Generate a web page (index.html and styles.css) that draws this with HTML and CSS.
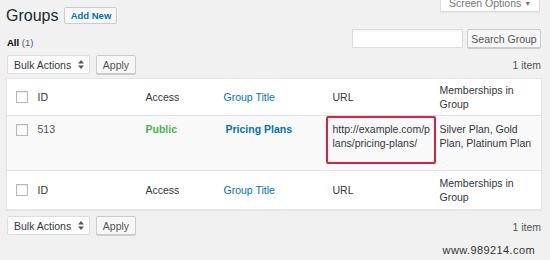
FILE: index.html
```html
<!DOCTYPE html>
<html lang="en">
<head>
    <meta charset="UTF-8">
    <title>Groups</title>
    <link rel="stylesheet" href="styles.css">
</head>
<body>
    <div class="wrap">
        <div class="screen-options">Screen Options <span class="caret">&#9660;</span></div>

        <div class="title-row">
            <h1>Groups</h1>
            <a href="#" class="add-new">Add New</a>
        </div>

        <div class="filter-row">
            <div class="views"><b>All</b> <span class="count">(1)</span></div>
            <div class="search-box">
                <input type="text" class="search-input">
                <button class="btn">Search Group</button>
            </div>
        </div>

        <div class="tablenav">
            <div class="actions">
                <div class="select">
                    <span>Bulk Actions</span>
                    <svg width="6" height="9" viewBox="0 0 6 9"><path d="M3 0L6 3.5H0Z M3 9L6 5.5H0Z" fill="#555"/></svg>
                </div>
                <button class="btn">Apply</button>
            </div>
            <div class="num">1 item</div>
        </div>

        <table class="list">
            <colgroup>
                <col style="width: 25px">
                <col style="width: 108px">
                <col style="width: 78px">
                <col style="width: 109px">
                <col style="width: 107px">
                <col style="width: 108px">
            </colgroup>
            <thead>
                <tr>
                    <th class="check"><span class="cb"></span></th>
                    <th>ID</th>
                    <th>Access</th>
                    <th class="sortable">Group Title</th>
                    <th>URL</th>
                    <th>Memberships in Group</th>
                </tr>
            </thead>
            <tbody>
                <tr>
                    <td class="check"><span class="cb"></span></td>
                    <td class="id">513</td>
                    <td class="public">Public</td>
                    <td class="title">Pricing Plans</td>
                    <td class="url">http://example.com/plans/pricing-plans/<span class="highlight"></span></td>
                    <td>Silver Plan, Gold Plan, Platinum Plan</td>
                </tr>
            </tbody>
            <tfoot>
                <tr>
                    <th class="check"><span class="cb"></span></th>
                    <th>ID</th>
                    <th>Access</th>
                    <th class="sortable">Group Title</th>
                    <th>URL</th>
                    <th>Memberships in Group</th>
                </tr>
            </tfoot>
        </table>

        <div class="tablenav bottom">
            <div class="actions">
                <div class="select">
                    <span>Bulk Actions</span>
                    <svg width="6" height="9" viewBox="0 0 6 9"><path d="M3 0L6 3.5H0Z M3 9L6 5.5H0Z" fill="#555"/></svg>
                </div>
                <button class="btn">Apply</button>
            </div>
            <div class="num">1 item</div>
        </div>

        <div class="watermark">www.989214.com</div>
    </div>
</body>
</html>
```

FILE: styles.css
```css
* {
    margin: 0;
    padding: 0;
    box-sizing: border-box;
}

body {
    font-family: "Liberation Sans", Arial, sans-serif;
    font-size: 10.5px;
    background-color: #f1f1f1;
    color: #32373c;
    overflow: hidden;
}

.wrap {
    width: 550px;
    padding: 0 9px 0 6px;
}

.screen-options {
    float: right;
    width: 100px;
    height: 21px;
    margin-top: -9px;
    margin-right: 1px;
    padding-top: 4px;
    line-height: 16px;
    text-align: center;
    background-color: #fff;
    border: 1px solid #ddd;
    border-top: none;
    box-shadow: 0 1px 1px rgba(0,0,0,0.04);
    color: #72777c;
}

.screen-options .caret {
    font-size: 7px;
    vertical-align: 1px;
}

.title-row {
    display: flex;
    align-items: center;
    padding-top: 7px;
    height: 24px;
}

.title-row h1 {
    font-size: 16px;
    font-weight: 400;
    line-height: 17px;
    color: #23282d;
}

.add-new {
    margin-left: 6px;
    width: 53px;
    height: 17px;
    line-height: 15px;
    text-align: center;
    border: 1px solid #ccc;
    border-radius: 2px;
    background-color: #f7f7f7;
    color: #0073aa;
    font-size: 9.5px;
    font-weight: bold;
    text-decoration: none;
}

.filter-row {
    display: flex;
    justify-content: space-between;
    align-items: flex-end;
    margin-top: 5px;
    height: 19px;
}

.views {
    margin-left: 1px;
    margin-bottom: -1px;
    line-height: 12px;
    font-size: 9.5px;
    color: #000;
}

.views .count {
    color: #555d66;
}

.search-box {
    display: flex;
    gap: 4px;
}

.search-input {
    width: 111px;
    height: 19px;
    border: 1px solid #ddd;
    background-color: #fff;
    box-shadow: inset 0 1px 2px rgba(0,0,0,0.07);
}

.btn {
    height: 19px;
    padding: 0 6px;
    font-family: inherit;
    font-size: 10.5px;
    white-space: nowrap;
    color: #555;
    background-color: #f7f7f7;
    border: 1px solid #ccc;
    border-radius: 2px;
    box-shadow: 0 1px 0 #ccc;
}

.search-box .btn {
    width: 74px;
    padding: 0;
}

.tablenav {
    display: flex;
    justify-content: space-between;
    align-items: center;
    margin-top: 7px;
    height: 19px;
}

.tablenav.bottom {
    margin-top: 6px;
}

.actions {
    display: flex;
    gap: 6px;
    margin-left: 1px;
}

.actions .btn {
    width: 40px;
    padding: 0;
}

.select {
    display: flex;
    justify-content: space-between;
    align-items: center;
    width: 83px;
    height: 19px;
    padding: 0 5px 0 6px;
    background-color: #fff;
    border: 1px solid #ddd;
    border-radius: 2px;
    color: #32373c;
}

.num {
    color: #555;
}

.tablenav.bottom .num {
    margin-top: 2px;
}

.list {
    width: 535px;
    margin-top: 4px;
    table-layout: fixed;
    border-collapse: collapse;
    background-color: #fff;
    border: 1px solid #e5e5e5;
    box-shadow: 0 1px 1px rgba(0,0,0,0.04);
}

.list th,
.list td {
    padding: 0 6px;
    text-align: left;
    font-weight: 400;
    line-height: 14px;
}

.list thead th {
    height: 37px;
    vertical-align: middle;
    border-bottom: 1px solid #e1e1e1;
}

.list tfoot th {
    height: 39px;
    vertical-align: middle;
    border-top: 1px solid #e1e1e1;
}

.list tbody td {
    height: 55px;
    padding-top: 6px;
    vertical-align: top;
    background-color: #f9f9f9;
}

.list .check {
    padding-left: 9px;
    padding-right: 0;
}

.list tbody .check {
    padding-top: 8px;
}

.cb {
    display: block;
    width: 12px;
    height: 12px;
    background-color: #fff;
    border: 1px solid #b4b9be;
    box-shadow: inset 0 1px 2px rgba(0,0,0,0.1);
}

.sortable {
    color: #0073aa;
}

.id {
    color: #555;
}

.list td.public {
    color: #46b450;
    font-weight: bold;
}

.list td.title {
    color: #0073aa;
    font-weight: bold;
    padding-left: 8px;
}

.list td.url {
    position: relative;
    padding-right: 3px;
    word-break: break-all;
}

.highlight {
    position: absolute;
    left: -1px;
    top: 0;
    width: 110px;
    height: 48px;
    border: 2px solid #d8223f;
    border-radius: 2px;
}

.watermark {
    margin-top: 8px;
    padding-right: 6px;
    text-align: right;
    line-height: 14px;
    font-size: 11px;
    letter-spacing: 0.4px;
    color: #333;
}
```
